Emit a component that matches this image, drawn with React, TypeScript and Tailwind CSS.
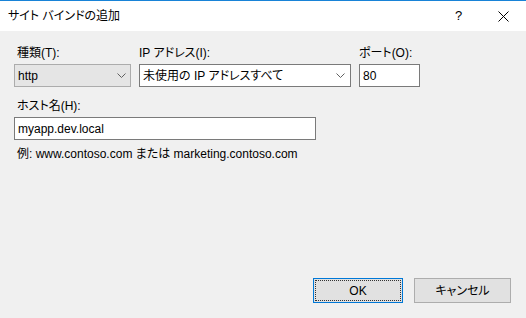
import React from "react";

function Chevron() {
  return (
    <svg width="9" height="5" viewBox="0 0 9 5" className="block">
      <path d="M0.5 0.5 L4.5 4.5 L8.5 0.5" fill="none" stroke="#606060" strokeWidth="1" />
    </svg>
  );
}

export default function App() {
  return (
    <div className="w-[526px] h-[318px] bg-[#f0f0f0] flex flex-col text-[12px] text-black leading-[16px] overflow-hidden font-['Liberation_Sans','Noto_Sans_CJK_JP',sans-serif] [font-feature-settings:'palt']">
      <div className="h-[31px] bg-white border-t border-[#1883d7] flex items-center shrink-0">
        <span className="pl-[8px] text-[12px]">サイト バインドの追加</span>
        <div className="ml-auto flex h-full">
          <div className="w-[45px] h-full flex items-center justify-center text-[13px]">?</div>
          <div className="w-[45px] h-full flex items-center justify-center">
            <svg width="11" height="11" viewBox="0 0 11 11">
              <path d="M0.5 0.5 L10.5 10.5 M10.5 0.5 L0.5 10.5" stroke="#000" strokeWidth="1" />
            </svg>
          </div>
        </div>
      </div>

      <div className="flex-1 flex flex-col px-[14px] pt-[14px] pb-[15px]">
        <div className="flex gap-[8px]">
          <div className="flex flex-col w-[117px]">
            <span className="pl-[3px] mb-[3px] h-[16px]">種類(T):</span>
            <div className="h-[23px] bg-[#e5e5e5] border border-[#acacac] flex items-center pl-[3px] pr-[4px]">
              <span className="flex-1">http</span>
              <Chevron />
            </div>
          </div>
          <div className="flex flex-col w-[212px]">
            <span className="mb-[3px] h-[16px]">IP アドレス(I):</span>
            <div className="h-[23px] bg-white border border-[#7a7a7a] flex items-center pl-[3px] pr-[5px]">
              <span className="flex-1">未使用の IP アドレスすべて</span>
              <Chevron />
            </div>
          </div>
          <div className="flex flex-col w-[61px]">
            <span className="mb-[3px] h-[16px]">ポート(O):</span>
            <div className="h-[23px] bg-white border border-[#7a7a7a] flex items-center pl-[3px]">
              80
            </div>
          </div>
        </div>

        <span className="pl-[3px] mt-[11px] mb-[3px] h-[16px]">ホスト名(H):</span>
        <div className="w-[302px] h-[23px] bg-white border border-[#7a7a7a] flex items-center pl-[3px]">
          myapp.dev.local
        </div>
        <span className="pl-[3px] mt-[6px] h-[16px]">例: www.contoso.com または marketing.contoso.com</span>

        <div className="mt-auto flex justify-end gap-[11px] pr-px">
          <div className="w-[90px] h-[25px] bg-[#e1e1e1] border border-[#0078d7] p-[1px]">
            <div className="w-full h-full border border-dotted border-[#333] flex items-center justify-center">
              OK
            </div>
          </div>
          <div className="w-[97px] h-[25px] bg-[#e1e1e1] border border-[#adadad] flex items-center justify-center">
            キャンセル
          </div>
        </div>
      </div>
    </div>
  );
}
